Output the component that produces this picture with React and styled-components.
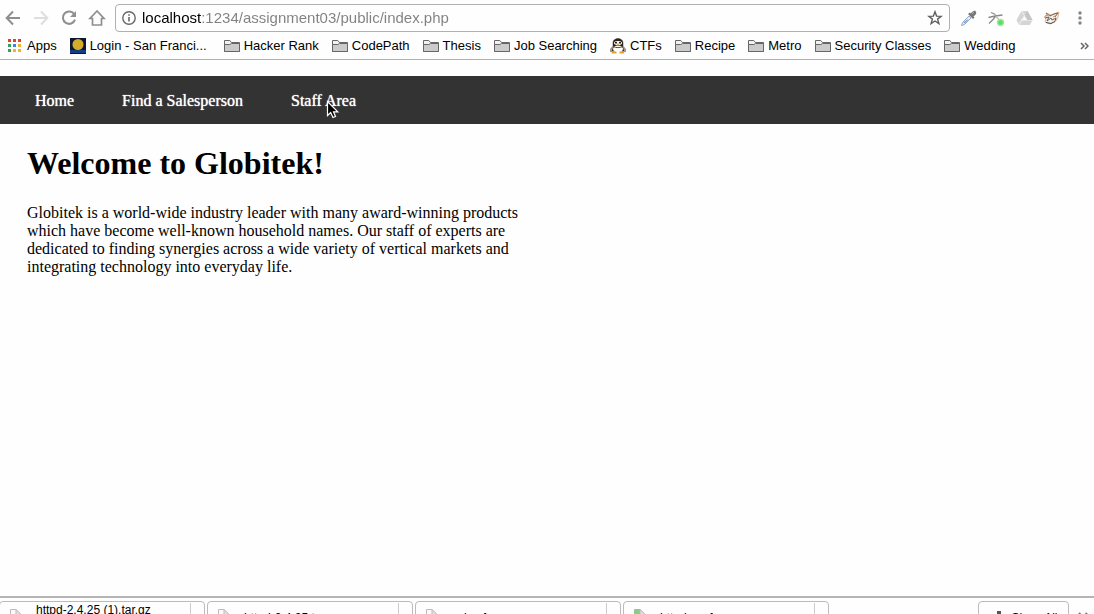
import React from "react";
import styled, { createGlobalStyle } from "styled-components";

const GlobalStyle = createGlobalStyle`
  *, *::before, *::after { box-sizing: border-box; }
  body { margin: 0; background: #fefefe; }
`;

const sans = `"Liberation Sans", Arial, sans-serif`;
const serif = `"Liberation Serif", "Times New Roman", serif`;

const Window = styled.div`
  display: flex;
  flex-direction: column;
  height: 100vh;
  overflow: hidden;
  background: #fefefe;
  color: #000;
`;

const BrowserHeader = styled.header`
  flex: none;
  border-bottom: 1px solid #b2b2b2;
  font-family: ${sans};
`;

const Toolbar = styled.div`
  display: flex;
  align-items: center;
  height: 36px;
  padding-left: 4px;
`;

const IconButton = styled.button`
  display: flex;
  align-items: center;
  justify-content: center;
  flex: none;
  width: 28px;
  height: 28px;
  padding: 0;
  border: 0;
  background: none;
`;

const NavButtons = styled.div`
  display: flex;
  margin-left: -5px;
`;

const AddressBar = styled.form`
  display: flex;
  align-items: center;
  flex: 1;
  height: 28px;
  margin: 0 4px;
  border: 1px solid #b0b0b0;
  border-radius: 4px;
`;

const SiteInfo = styled(IconButton)`
  width: 26px;
`;

const AddressInput = styled.input`
  flex: 1;
  min-width: 0;
  height: 24px;
  padding: 0;
  border: 0;
  outline: 0;
  font: 15px/24px ${sans};
  color: transparent;
  background: linear-gradient(90deg, #000 59px, #808080 59px);
  background-clip: text;
  -webkit-background-clip: text;
`;

const BookmarkBar = styled.nav`
  display: flex;
  align-items: center;
  justify-content: space-between;
  height: 23px;
  padding: 0 0 4px 7px;
`;

const BookmarkList = styled.ul`
  display: flex;
  gap: 13px;
  margin: 0;
  padding: 0;
  list-style: none;
`;

const Bookmark = styled.a`
  display: flex;
  align-items: center;
  gap: 4px;
  min-width: ${(p) => (p.$truncated ? "141px" : "0")};
  font-size: 13px;
  line-height: 18px;
  white-space: nowrap;
  color: #000;
  text-decoration: none;
`;

const Overflow = styled(IconButton)`
  width: 20px;
  height: 18px;
`;

const Page = styled.div`
  flex: 1;
  min-height: 0;
  padding-top: 16px;
  font-family: ${serif};
  font-size: 16px;
  line-height: 18px;
`;

const SiteNav = styled.nav`
  height: 48px;
  background: #333;
`;

const SiteNavList = styled.ul`
  display: flex;
  align-items: center;
  gap: 48px;
  height: 100%;
  margin: 0;
  padding: 2px 35px 0;
  list-style: none;
`;

const SiteNavItem = styled.li`
  position: relative;
`;

const SiteLink = styled.a`
  color: #fff;
  text-decoration: none;
  text-shadow: 0 0 1px #fff;
`;

const Pointer = styled.svg`
  position: absolute;
  left: 35px;
  top: 8px;
  width: 14px;
  height: 19px;
  pointer-events: none;
`;

const Content = styled.main`
  padding: 21px 27px;
`;

const Title = styled.h1`
  margin: 0 0 23px;
  font-size: 32px;
  line-height: 36px;
`;

const Intro = styled.p`
  max-width: 500px;
  margin: 0;
`;

const Shelf = styled.footer`
  display: flex;
  align-items: flex-start;
  flex: none;
  gap: 2px;
  height: 18px;
  margin-left: -1px;
  padding-top: 3px;
  overflow: hidden;
  border-top: 2px solid #b4b4b4;
  font-family: ${sans};
  font-size: 12px;
`;

const Download = styled.div`
  display: flex;
  flex: 0 1 206px;
  height: 34px;
  border: 1px solid #bbb;
  border-radius: 4px;
`;

const FileButton = styled.button`
  display: flex;
  align-items: center;
  flex: 1;
  gap: 14px;
  height: 32px;
  padding: 0 0 0 10px;
  border: 0;
  background: none;
  font: inherit;
  color: #000;
  text-align: left;
`;

const FileText = styled.span`
  display: flex;
  flex-direction: column;
  line-height: 16px;
`;

const FileMenu = styled.button`
  width: 14px;
  height: 30px;
  margin-top: 1px;
  padding: 0;
  border: 0;
  border-left: 1px solid #ccc;
  background: none;
`;

const ShowAll = styled.button`
  display: flex;
  align-items: center;
  justify-content: center;
  gap: 6px;
  width: 91px;
  height: 34px;
  margin-left: auto;
  padding: 0 0 0 4px;
  border: 1px solid #bbb;
  border-radius: 4px;
  background: none;
  font: inherit;
  color: #000;
`;

const ShelfClose = styled(IconButton)`
  width: 23px;
  height: 34px;
`;

const stroke = { fill: "none", stroke: "#8f8f8f", strokeWidth: 2 };

const BackIcon = () => (
  <svg width="16" height="16" viewBox="0 0 16 16" {...stroke}>
    <path d="M15 8H2M8 1.5 1.7 8 8 14.5" />
  </svg>
);

const ForwardIcon = () => (
  <svg width="16" height="16" viewBox="0 0 16 16" {...stroke} stroke="#dedede">
    <path d="M1 8h13M8 1.5 14.3 8 8 14.5" />
  </svg>
);

const ReloadIcon = () => (
  <svg width="16" height="16" viewBox="0 0 16 16" {...stroke}>
    <path d="M13.4 4.4A6.2 6.2 0 1 0 14 9.6" />
    <path d="M15 1v6H9z" fill="#8f8f8f" stroke="none" />
  </svg>
);

const HomeIcon = () => (
  <svg width="18" height="18" viewBox="0 0 18 18" {...stroke} strokeWidth="1.7">
    <path d="M9 2 2 9.500h2.500v6.500h9V9.500H16L9 2Z" />
  </svg>
);

const InfoIcon = () => (
  <svg width="14" height="14" viewBox="0 0 14 14" fill="none" stroke="#666">
    <circle cx="7" cy="7" r="6.2" strokeWidth="1.4" />
    <path d="M7 6v4.5M7 3.2v1.6" strokeWidth="1.6" />
  </svg>
);

const StarIcon = () => (
  <svg width="16" height="16" viewBox="0 0 16 16" fill="none" stroke="#5f5f5f" strokeWidth="1.4">
    <path d="m8 1.8 1.6 4.3 4.6.2-3.6 2.8 1.3 4.5L8 11l-3.9 2.6 1.3-4.5-3.6-2.8 4.6-.2z" />
  </svg>
);

const DropperIcon = () => (
  <svg width="17" height="17" viewBox="0 0 17 17">
    <path d="m9 6 2 2-6.500 6.500-3 1 1-3z" fill="#e4eefb" stroke="#9aa9be" />
    <path d="m3.500 12.500 4-3 1 0-4 4z" fill="#5b93e0" />
    <path d="m8 4 5 5 1.500-1.500-1-1C17 4 16.500 2 15.500 1.300c-1-1-3-.3-4.500 2.200l-1-1z" fill="#777" />
    <path d="m12 4 2-2" stroke="#aaa" />
  </svg>
);

const RunnerIcon = () => (
  <svg width="18" height="18" viewBox="0 0 18 18" fill="none" stroke="#8a8a8a" strokeWidth="1.3">
    <path d="M4 3.500 8.500 5.500M1.500 8.500 8 7l7.500-1M9 6.500 6.500 10l-4.500 4.500" />
    <path d="M9 7.500l3 3" stroke="#bbb" />
    <circle cx="13.500" cy="13.500" r="3" fill="#5ddb62" stroke="#9bea9b" />
  </svg>
);

const DriveIcon = () => (
  <svg width="17" height="16" viewBox="0 0 17 16">
    <path d="M5.500 1h6l5 9-2.500 5H3L.500 10z" fill="#d5d5d5" />
    <path d="m5.500 1 6 9h5M8.500 5.500 3 15M5 10h6.500" fill="none" stroke="#f3f3f3" />
    <path d="m8.500 6.500 2.300 3.500H6.300z" fill="#fefefe" />
    <path d="m11.500 1 5 9h-5l-3-5z" fill="#c6c6c6" />
  </svg>
);

const FoxIcon = () => (
  <svg width="18" height="16" viewBox="0 0 18 16" fill="none">
    <path d="m3 3 5 2 8-3-1 5-2 4-6 3-5-2 1-3-2-2 3-1z" fill="#f4f0ec" stroke="#e3b693" />
    <path d="m3 3 4 3 4-2 4-1-3 4M2 8l4-1-2 4 4-3 1 2 4-2-1 3" stroke="#6a5f58" />
    <path d="M3 12.500 8 13.500l4-2" stroke="#55483f" />
    <path d="M5 5 2 6M10 7l4-2" stroke="#d98b52" />
  </svg>
);

const MenuIcon = () => (
  <svg width="6" height="16" viewBox="0 0 6 16" fill="#858585">
    <circle cx="3" cy="3" r="1.700" />
    <circle cx="3" cy="8" r="1.700" />
    <circle cx="3" cy="13" r="1.700" />
  </svg>
);

const appColours = ["#e5402f", "#e5402f", "#e5402f", "#38a158", "#3c82ea", "#f2b32c", "#38a158", "#f2b32c", "#f2b32c"];

const AppsIcon = () => (
  <svg width="16" height="16" viewBox="0 0 16 16">
    {appColours.map((fill, i) => (
      <rect key={i} x={1 + (i % 3) * 5} y={1 + Math.floor(i / 3) * 5} width="3" height="3" fill={fill} />
    ))}
  </svg>
);

const SealIcon = () => (
  <svg width="16" height="16" viewBox="0 0 16 16">
    <path d="M0 0h16v16H0z" fill="#0c1830" />
    <path d="M0 12h16v3H0z" fill="#173d86" />
    <circle cx="8" cy="6.500" r="5.500" fill="#d4ac2b" />
  </svg>
);

const FolderIcon = () => (
  <svg width="16" height="16" viewBox="0 0 16 16" stroke="#666">
    <path d="M.500 13.500v-11h5.300l1.700 2h8v9z" fill="#f2f2f2" />
    <path d="M.500 6.500h5.300l1.700-1h8v8H.500z" fill="#cbcbcb" />
  </svg>
);

const PenguinIcon = () => (
  <svg width="16" height="16" viewBox="0 0 16 16">
    <path d="M2.500 5C2.500-1.500 13.500-1.500 13.500 5v3l2.500 3v3H0v-3l2.500-3z" fill="#a3978b" />
    <path d="M3 5C3-1 13-1 13 5v4l1 4H2l1-4z" fill="#29231e" />
    <ellipse cx="8" cy="11" rx="5" ry="3.500" fill="#fff" />
    <ellipse cx="8" cy="5" rx="4" ry="2" fill="#fff" />
    <path d="M3 8.500c3 1.500 7 1.500 10 0" stroke="#5c4d3e" fill="none" />
    <path d="M5 4h2v1.500H5zM9 4h2v1.500H9z" fill="#222" />
    <path d="M6 5.500h4l-2 2z" fill="#efa51e" />
    <path d="M2 13.500h4.500v2H1.500zM9.500 13.500h4l1 2h-5z" fill="#e8a22b" />
  </svg>
);

const ChevronsIcon = () => (
  <svg width="9" height="8" viewBox="0 0 9 8" fill="none" stroke="#666" strokeWidth="1.500">
    <path d="m1 1 3 3-3 3M5 1l3 3-3 3" />
  </svg>
);

const FileIcon = ({ green }) => (
  <svg width="12" height="18" viewBox="0 0 12 18" fill={green ? "#8cc98a" : "#fafafa"} stroke={green ? "#8cc98a" : "#bbb"}>
    <path d="M.500 .500H6l5.500 5.500v11.500H.500z" />
    <path d="M6 .500V6h5.500z" fill="#e3e3e3" stroke="#bbb" />
  </svg>
);

const DownArrowIcon = () => (
  <svg width="12" height="14" viewBox="0 0 12 14" fill="#555">
    <path d="M4 0h4v7h3l-5 6-5-6h3z" />
  </svg>
);

const CloseIcon = () => (
  <svg width="10" height="12" viewBox="0 0 10 12" stroke="#777" strokeWidth="2">
    <path d="m1 1 8 9M9 1 1 10" />
  </svg>
);

const bookmarks = [
  { label: "Apps", Icon: AppsIcon },
  { label: "Login - San Franci...", Icon: SealIcon, truncated: true },
  { label: "Hacker Rank" },
  { label: "CodePath" },
  { label: "Thesis" },
  { label: "Job Searching" },
  { label: "CTFs", Icon: PenguinIcon },
  { label: "Recipe" },
  { label: "Metro" },
  { label: "Security Classes" },
  { label: "Wedding" },
];

const extensions = [
  { label: "Colour picker", Icon: DropperIcon },
  { label: "Runner", Icon: RunnerIcon },
  { label: "Drive", Icon: DriveIcon },
  { label: "Fox", Icon: FoxIcon },
  { label: "Menu", Icon: MenuIcon },
];

const downloads = [
  { name: "httpd-2.4.25 (1).tar.gz", status: "Cancelled" },
  { name: "httpd-2.4.25.tar.gz" },
  { name: "ssl.cnf" },
  { name: "httpd.conf", green: true },
];

export default function App() {
  return (
    <Window>
      <GlobalStyle />
      <BrowserHeader>
        <Toolbar>
          <NavButtons>
            <IconButton aria-label="Back"><BackIcon /></IconButton>
            <IconButton aria-label="Forward"><ForwardIcon /></IconButton>
            <IconButton aria-label="Reload"><ReloadIcon /></IconButton>
            <IconButton aria-label="Home page"><HomeIcon /></IconButton>
          </NavButtons>
          <AddressBar onSubmit={(e) => e.preventDefault()}>
            <SiteInfo type="button" aria-label="Site information"><InfoIcon /></SiteInfo>
            <AddressInput aria-label="Address" defaultValue="localhost:1234/assignment03/public/index.php" />
            <IconButton type="button" aria-label="Bookmark this page"><StarIcon /></IconButton>
          </AddressBar>
          {extensions.map(({ label, Icon }) => (
            <IconButton key={label} aria-label={label}><Icon /></IconButton>
          ))}
        </Toolbar>
        <BookmarkBar aria-label="Bookmarks">
          <BookmarkList>
            {bookmarks.map(({ label, Icon = FolderIcon, truncated }) => (
              <li key={label}>
                <Bookmark href="#" $truncated={truncated}><Icon />{label}</Bookmark>
              </li>
            ))}
          </BookmarkList>
          <Overflow aria-label="More bookmarks"><ChevronsIcon /></Overflow>
        </BookmarkBar>
      </BrowserHeader>

      <Page>
        <SiteNav aria-label="Site">
          <SiteNavList>
            <SiteNavItem><SiteLink href="#">Home</SiteLink></SiteNavItem>
            <SiteNavItem><SiteLink href="#">Find a Salesperson</SiteLink></SiteNavItem>
            <SiteNavItem>
              <SiteLink href="#">Staff Area</SiteLink>
              <Pointer viewBox="0 0 14 19" aria-hidden="true">
                <path d="M1.500 1.500v14l3.200-3 2.300 5 2.500-1-2-4.700h4.300z" fill="#000" stroke="#fff" strokeWidth="1.200" />
              </Pointer>
            </SiteNavItem>
          </SiteNavList>
        </SiteNav>
        <Content>
          <Title>Welcome to Globitek!</Title>
          <Intro>
            Globitek is a world-wide industry leader with many award-winning products which have become
            well-known household names. Our staff of experts are dedicated to finding synergies across a
            wide variety of vertical markets and integrating technology into everyday life.
          </Intro>
        </Content>
      </Page>

      <Shelf>
        {downloads.map(({ name, status, green }) => (
          <Download key={name}>
            <FileButton>
              <FileIcon green={green} />
              <FileText>
                <span>{name}</span>
                {status && <span>{status}</span>}
              </FileText>
            </FileButton>
            <FileMenu aria-label={`Options for ${name}`} />
          </Download>
        ))}
        <ShowAll><DownArrowIcon />Show All</ShowAll>
        <ShelfClose aria-label="Close downloads"><CloseIcon /></ShelfClose>
      </Shelf>
    </Window>
  );
}
